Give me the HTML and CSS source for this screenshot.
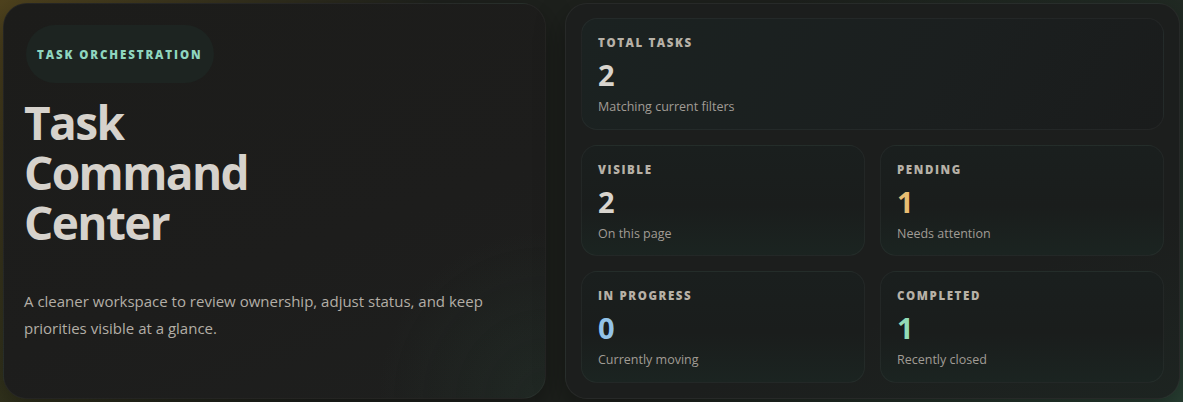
FILE: index.html
```html
<!DOCTYPE html>
<html lang="en">

<head>
    <meta charset="UTF-8">
    <meta name="viewport" content="width=device-width, initial-scale=1.0">
    <title>Task Command Center</title>
    <link rel="stylesheet" href="styles.css">
</head>

<body>
    <div class="hero">
        <section class="intro">
            <div class="intro-top">
                <span class="eyebrow">Task Orchestration</span>
                <h1 class="title">
                    <span class="title-line">Task</span>
                    <span class="title-line">Command</span>
                    <span class="title-line">Center</span>
                </h1>
            </div>
            <p class="lead">A cleaner workspace to review ownership, adjust status, and keep priorities visible at a glance.</p>
        </section>

        <section class="stats">
            <div class="stat-card wide">
                <span class="stat-label">Total Tasks</span>
                <span class="stat-value">2</span>
                <span class="stat-note">Matching current filters</span>
            </div>
            <div class="stat-card">
                <span class="stat-label">Visible</span>
                <span class="stat-value">2</span>
                <span class="stat-note">On this page</span>
            </div>
            <div class="stat-card">
                <span class="stat-label">Pending</span>
                <span class="stat-value pending">1</span>
                <span class="stat-note">Needs attention</span>
            </div>
            <div class="stat-card">
                <span class="stat-label">In Progress</span>
                <span class="stat-value progress">0</span>
                <span class="stat-note">Currently moving</span>
            </div>
            <div class="stat-card">
                <span class="stat-label">Completed</span>
                <span class="stat-value done">1</span>
                <span class="stat-note">Recently closed</span>
            </div>
        </section>
    </div>
</body>

</html>
```

FILE: styles.css
```css
/* Page background with a warm top-left and green bottom-right glow */
body {
    margin: 0;
    padding: 3px;
    height: 402px;
    box-sizing: border-box;
    overflow: hidden;
    font-family: "Open Sans", "Noto Sans", sans-serif;
    color: #d8d4ce;
    background:
        radial-gradient(circle at 0% 0%, rgba(120, 95, 30, 0.55), transparent 35%),
        radial-gradient(circle at 0% 100%, rgba(80, 80, 30, 0.35), transparent 25%),
        radial-gradient(circle at 100% 100%, rgba(50, 90, 70, 0.55), transparent 45%),
        #1e211d;
}

/* Two column hero */
.hero {
    display: grid;
    grid-template-columns: 543fr 615fr;
    gap: 19px;
    height: 100%;
}

/* Left intro panel */
.intro {
    display: flex;
    flex-direction: column;
    justify-content: space-between;
    padding: 21px 20px 56px;
    border-radius: 24px;
    border: 1px solid rgba(255, 255, 255, 0.04);
    background:
        radial-gradient(circle at 100% 100%, rgba(40, 80, 60, 0.18), transparent 25%),
        linear-gradient(160deg, #1c1c1a, #1d1d1c 60%, #1e1f1e);
    box-shadow: 0 10px 30px rgba(0, 0, 0, 0.35);
}

.eyebrow {
    display: inline-block;
    margin-left: 2px;
    padding: 21px 11px 20px;
    border-radius: 30px;
    background: #1d2421;
    color: #8fd6bf;
    font-size: 11.5px;
    font-weight: 800;
    letter-spacing: 1.9px;
    text-transform: uppercase;
    line-height: 17px;
}

/* Tight three line heading */
.title {
    display: flex;
    flex-direction: column;
    margin: 14px 0 0;
    font-size: 46px;
    font-weight: 700;
    letter-spacing: -1.6px;
    color: #d6d2cc;
}

.title-line {
    height: 50px;
    line-height: 50px;
}

.lead {
    margin: 0;
    max-width: 480px;
    font-size: 15px;
    line-height: 27px;
    color: #b3aea6;
}

/* Right stats panel */
.stats {
    display: grid;
    grid-template-columns: 1fr 1fr;
    grid-template-rows: repeat(3, 1fr);
    gap: 15px;
    padding: 14px 15px 15px;
    border-radius: 22px;
    border: 1px solid rgba(255, 255, 255, 0.05);
    background: linear-gradient(160deg, #1c1e1d, #1c1e1d 70%, #1d2421);
    box-shadow: 0 10px 30px rgba(0, 0, 0, 0.35);
}

.stat-card {
    display: flex;
    flex-direction: column;
    padding: 16px 16px 0;
    border-radius: 16px;
    border: 1px solid rgba(255, 255, 255, 0.045);
    background: linear-gradient(180deg, #1a1f1e, #1a1d1c 55%, #1b2421);
}

.stat-card.wide {
    grid-column: span 2;
    background: linear-gradient(120deg, #1b2221, #1b1f1f 60%, #1a1c1c);
}

.stat-label {
    font-size: 11.5px;
    font-weight: 800;
    letter-spacing: 1.6px;
    text-transform: uppercase;
    color: #b7b1a7;
    line-height: 16px;
}

.stat-value {
    margin-top: 7px;
    font-size: 29px;
    font-weight: 700;
    line-height: 34px;
    color: #d8d4ce;
}

.stat-value.pending {
    color: #e8bd72;
}

.stat-value.progress {
    color: #93c3e8;
}

.stat-value.done {
    color: #93dcb7;
}

.stat-note {
    margin-top: 6px;
    font-size: 12.5px;
    line-height: 18px;
    color: #a19c95;
}
```
